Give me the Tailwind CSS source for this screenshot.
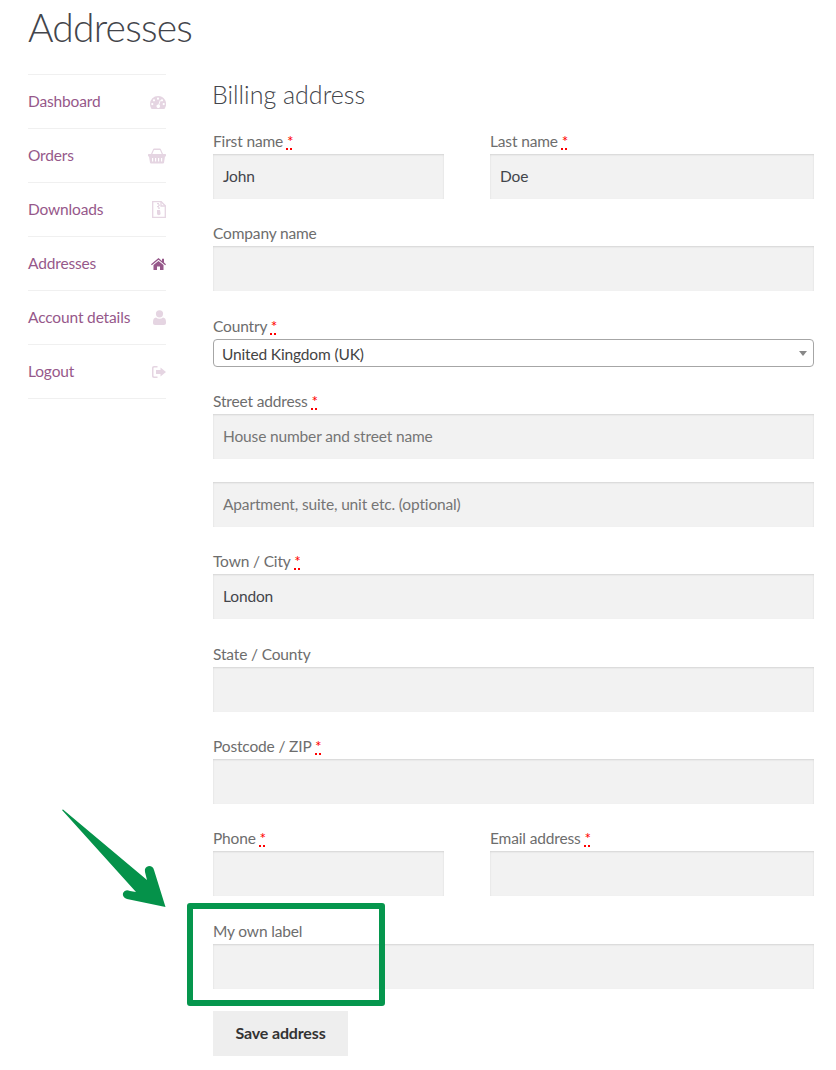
<!DOCTYPE html>
<html lang="en">
<head>
    <meta charset="UTF-8">
    <title>Addresses</title>
    <script src="https://cdn.jsdelivr.net/npm/@tailwindcss/browser@4"></script>
</head>
<body class="bg-white font-['Lato','Liberation_Sans',sans-serif] text-[15.5px] tracking-[-0.15px] text-[#6d6d6d] overflow-hidden">
<div class="relative w-[836px] h-[1070px] overflow-hidden">
    <h1 class="pl-[28px] h-[74px] text-[39px] tracking-[-0.8px] font-light leading-[54px] text-[#43454b]">Addresses</h1>
    <div class="flex pl-[28px]">
        <!-- account nav -->
        <nav class="w-[138px] border-t border-[#f0f0f0] text-[#96588a]">
            <a class="flex h-[54px] items-center justify-between border-b border-[#f0f0f0]">Dashboard
                <svg class="w-[16px] h-[14px] text-[#e5d5e2]" viewBox="0 0 16 14" fill="currentColor"><path fill-rule="evenodd" d="M8 1a8 8 0 0 0-8 8c0 1.600.4 3 1.100 4.200l.5.8h12.800l.5-.8A8 8 0 0 0 8 1zM8 2.600a1.100 1.100 0 1 1 0 2.200 1.100 1.100 0 0 1 0-2.200zM4 4.200a1.100 1.100 0 1 1 0 2.200 1.100 1.100 0 0 1 0-2.200zm8 0a1.100 1.100 0 1 1 0 2.200 1.100 1.100 0 0 1 0-2.200zM2.300 8a1.100 1.100 0 1 1 0 2.200 1.100 1.100 0 0 1 0-2.200zm11.400 0a1.100 1.100 0 1 1 0 2.200 1.100 1.100 0 0 1 0-2.200zM10 5l.8.3-1.500 4.400a1.800 1.800 0 1 1-.9-.3z"/></svg>
            </a>
            <a class="flex h-[54px] items-center justify-between border-b border-[#f0f0f0]">Orders
                <svg class="w-[18px] h-[16px] text-[#e5d5e2]" viewBox="0 0 18 16" fill="currentColor"><path fill-rule="evenodd" d="M3 6 5 1.400C5.200.7 5.800.5 6.500.5h5c.7 0 1.300.2 1.500.9L15 6h2.400c.3 0 .6.300.6.600V8c0 .3-.3.500-.6.500H17l-1 6.200c-.1.500-.5.800-1 .8H3c-.5 0-.9-.3-1-.8L1 8.500H.6C.3 8.500 0 8.300 0 8V6.600C0 6.300.3 6 .6 6zM4.300 6h9.400L12 2H6zM4 10v3.500h1.200V10zm3 0v3.500h1.200V10zm3 0v3.500h1.200V10zm3 0v3.500h1.200V10z"/></svg>
            </a>
            <a class="flex h-[54px] items-center justify-between border-b border-[#f0f0f0]">Downloads
                <svg class="w-[14px] h-[17px] text-[#e5d5e2]" viewBox="0 0 14 17" fill="none" stroke="currentColor"><path stroke-width="1.300" d="M.7.700h8.500l4.100 4.100v11.500H.7z"/><path stroke-width="1.300" d="M9 .7v4.300h4.300"/><path fill="currentColor" stroke="none" d="M5 2h2v1.200H5zm1 1.500h2v1.200H6zm-1 1.500h2v1.200H5zm1 1.500h2v1.200H6zM5 9h3l.6 3.500a1.800 1.800 0 1 1-3.600 0z"/></svg>
            </a>
            <a class="flex h-[54px] items-center justify-between border-b border-[#f0f0f0]">Addresses
                <svg class="w-[15px] h-[12px] text-[#96588a]" viewBox="0 0 15 12" fill="currentColor"><path d="M7.500 0 11 2.900V.8h2v3.800l2 1.700-.8.900-6.700-5.500L.8 7.200 0 6.300zM2.500 7l5-4.100 5 4.100v5H9V8.500H6V12H2.500z"/></svg>
            </a>
            <a class="flex h-[54px] items-center justify-between border-b border-[#f0f0f0]">Account details
                <svg class="w-[13px] h-[15px] text-[#e5d5e2]" viewBox="0 0 13 15" fill="currentColor"><circle cx="6.500" cy="3.800" r="3.600"/><path d="M3 7.500c1 .8 2.200 1.200 3.500 1.200S9 8.300 10 7.500c2 .2 3 1.700 3 4.500v1c0 1.200-.8 2-2 2H2c-1.200 0-2-.8-2-2v-1c0-2.800 1-4.300 3-4.500z"/></svg>
            </a>
            <a class="flex h-[54px] items-center justify-between border-b border-[#f0f0f0]">Logout
                <svg class="w-[14px] h-[12px] text-[#e5d5e2]" viewBox="0 0 14 12" fill="currentColor"><path d="M2 0h3.500v1.500H2.500c-.6 0-1 .4-1 1v7c0 .6.400 1 1 1h3V12H2c-1.200 0-2-.8-2-2V2C0 .8.800 0 2 0z"/><path d="M8.500 1.500 14 6l-5.500 4.500V8H4V4h4.500z"/></svg>
            </a>
        </nav>

        <!-- billing form -->
        <form class="ml-[47px] w-[601px]">
            <h3 class="h-[56px] -ml-[1px] text-[25px] tracking-normal font-light leading-[40px] text-[#43454b]">Billing address</h3>
            <div class="flex justify-between">
                <div class="w-[231px]">
                    <label class="block h-[24px] leading-[22px]">First name <abbr class="text-[#ff0000] underline decoration-dotted decoration-2">*</abbr></label>
                    <div class="h-[45px] bg-[#f2f2f2] px-[10px] leading-[45px] text-[#43454b] shadow-[inset_0_1px_2px_rgba(0,0,0,0.125)]">John</div>
                </div>
                <div class="w-[324px]">
                    <label class="block h-[24px] leading-[22px]">Last name <abbr class="text-[#ff0000] underline decoration-dotted decoration-2">*</abbr></label>
                    <div class="h-[45px] bg-[#f2f2f2] px-[10px] leading-[45px] text-[#43454b] shadow-[inset_0_1px_2px_rgba(0,0,0,0.125)]">Doe</div>
                </div>
            </div>
            <div class="mt-[23px]">
                <label class="block h-[24px] leading-[22px]">Company name</label>
                <div class="h-[45px] bg-[#f2f2f2] shadow-[inset_0_1px_2px_rgba(0,0,0,0.125)]"></div>
            </div>
            <div class="mt-[24px]">
                <label class="block h-[24px] leading-[22px]">Country <abbr class="text-[#ff0000] underline decoration-dotted decoration-2">*</abbr></label>
                <div class="relative h-[28px] rounded-[4px] border border-[#a6a6a6] px-[8px] leading-[28px] text-[#444]">United Kingdom (UK)
                    <span class="absolute right-[6px] top-[11px] border-x-[4px] border-t-[5px] border-x-transparent border-t-[#888]"></span>
                </div>
            </div>
            <div class="mt-[23px]">
                <label class="block h-[24px] leading-[22px]">Street address <abbr class="text-[#ff0000] underline decoration-dotted decoration-2">*</abbr></label>
                <div class="h-[45px] bg-[#f2f2f2] px-[10px] leading-[45px] text-[#757575] shadow-[inset_0_1px_2px_rgba(0,0,0,0.125)]">House number and street name</div>
                <div class="mt-[23px] h-[45px] bg-[#f2f2f2] px-[10px] leading-[45px] text-[#757575] shadow-[inset_0_1px_2px_rgba(0,0,0,0.125)]">Apartment, suite, unit etc. (optional)</div>
            </div>
            <div class="mt-[23px]">
                <label class="block h-[24px] leading-[22px]">Town / City <abbr class="text-[#ff0000] underline decoration-dotted decoration-2">*</abbr></label>
                <div class="h-[45px] bg-[#f2f2f2] px-[10px] leading-[45px] text-[#43454b] shadow-[inset_0_1px_2px_rgba(0,0,0,0.125)]">London</div>
            </div>
            <div class="mt-[24px]">
                <label class="block h-[24px] leading-[22px]">State / County</label>
                <div class="h-[45px] bg-[#f2f2f2] shadow-[inset_0_1px_2px_rgba(0,0,0,0.125)]"></div>
            </div>
            <div class="mt-[23px]">
                <label class="block h-[24px] leading-[22px]">Postcode / ZIP <abbr class="text-[#ff0000] underline decoration-dotted decoration-2">*</abbr></label>
                <div class="h-[45px] bg-[#f2f2f2] shadow-[inset_0_1px_2px_rgba(0,0,0,0.125)]"></div>
            </div>
            <div class="mt-[23px] flex justify-between">
                <div class="w-[231px]">
                    <label class="block h-[24px] leading-[22px]">Phone <abbr class="text-[#ff0000] underline decoration-dotted decoration-2">*</abbr></label>
                    <div class="h-[45px] bg-[#f2f2f2] shadow-[inset_0_1px_2px_rgba(0,0,0,0.125)]"></div>
                </div>
                <div class="w-[324px]">
                    <label class="block h-[24px] leading-[22px]">Email address <abbr class="text-[#ff0000] underline decoration-dotted decoration-2">*</abbr></label>
                    <div class="h-[45px] bg-[#f2f2f2] shadow-[inset_0_1px_2px_rgba(0,0,0,0.125)]"></div>
                </div>
            </div>
            <div class="mt-[24px]">
                <label class="block h-[24px] leading-[22px]">My own label</label>
                <div class="h-[45px] bg-[#f2f2f2] shadow-[inset_0_1px_2px_rgba(0,0,0,0.125)]"></div>
            </div>
            <button type="button" class="mt-[22px] block h-[45px] w-[135px] bg-[#eeeeee] pb-[2px] text-[16px] font-bold text-[#333333]">Save address</button>
        </form>
    </div>

    <!-- annotation laid over the form -->
    <div class="absolute left-[187px] top-[903px] h-[103px] w-[198px] rounded-[3px] border-[6px] border-[#05964d]"></div>
    <svg class="absolute left-[60px] top-[808px]" width="108" height="102" viewBox="0 0 108 102">
        <path fill="#05924a" d="M2 2 3 1.500 87 72 85 64Q84 59 89 58 93 58 94 62L105.500 99 67 91Q62 89 63 85 65 81 70 83L76 84Z"/>
    </svg>
</div>
</body>
</html>
